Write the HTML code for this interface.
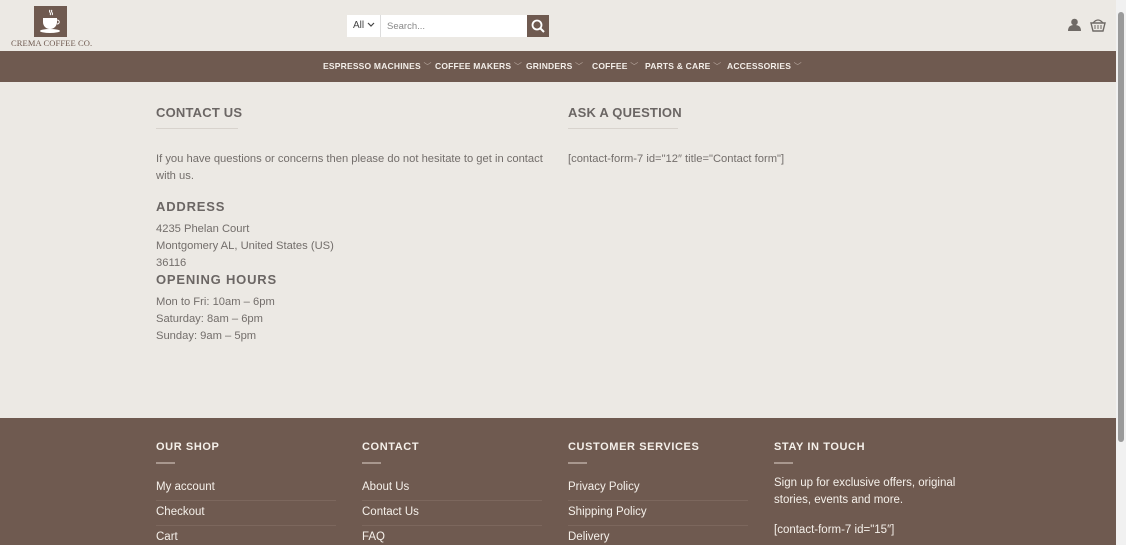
<!DOCTYPE html>
<html><head><meta charset="utf-8"><style>
*{box-sizing:border-box;margin:0;padding:0}
body{width:1126px;height:545px;overflow:hidden;background:#ece9e4;font-family:"Liberation Sans",sans-serif;color:#6b6664;position:relative}
.sb{position:absolute;right:0;top:0;width:10px;height:545px;background:#f1f1f1}
.sb i{position:absolute;left:2px;top:12px;width:6px;height:430px;background:#9a9a9a;border-radius:3px}
.hdr{position:absolute;left:0;top:0;width:1116px;height:51px}
.logo{position:absolute;left:34px;top:6px;width:33px;height:31px;background:#6f5a50}
.logotxt{position:absolute;left:11px;top:38px;font-family:"Liberation Serif",serif;font-size:8.5px;color:#6f5a50;letter-spacing:.1px}
.sel{position:absolute;left:347px;top:15px;width:34px;height:22px;background:#fff;font-size:10px;color:#444;padding:5px 6px;border-right:1px solid #ddd;white-space:nowrap}
.inp{position:absolute;left:381px;top:15px;width:146px;height:22px;background:#fff;font-size:9.5px;color:#888;padding:6px 6px}
.btn{position:absolute;left:527px;top:15px;width:22px;height:22px;background:#6f5a50}
.nav{position:absolute;left:0;top:51px;width:1116px;height:31px;background:#6f5a50;color:#f3eee9;font-size:8.5px;font-weight:bold;letter-spacing:.2px}
.nav span{position:absolute;top:10px;white-space:nowrap}
.nav b{font-weight:normal;color:#b9a9a0;font-size:8px}
h2{position:absolute;font-size:13px;font-weight:bold;color:#6b6664;letter-spacing:.2px}
.ul{position:absolute;height:1px;background:#d8d3cd}
p{position:absolute;font-size:11.2px;line-height:17px;color:#736e6b}
.foot{position:absolute;left:0;top:418px;width:1116px;height:127px;background:#6f5a50;color:#f5f0ea}
.foot h3{position:absolute;top:23px;font-size:11px;font-weight:bold;letter-spacing:.6px}
.foot .d{position:absolute;top:44px;width:19px;height:2px;background:#a8978e}
.foot a{position:absolute;font-size:11.5px;color:#f5f0ea}
.foot .l{position:absolute;height:1px;background:#7c675d;width:180px}
</style></head><body>
<div class="hdr">
<div class="logo"><svg width="33" height="31" viewBox="0 0 33 31"><path d="M16 4c-2 2 2 3 0 5M18 4c-2 2 2 3 0 5" stroke="#fff" fill="none" stroke-width="1"/><path d="M9 12h14v4c0 4-3 7-7 7s-7-3-7-7z" fill="#fff"/><path d="M23 14c3 0 3 4 0 4" stroke="#fff" fill="none"/><ellipse cx="16" cy="25" rx="10" ry="2" fill="#fff"/></svg></div>
<div class="logotxt">CREMA COFFEE CO.</div>
<div class="sel">All <svg width="8" height="6"><path d="M1 1l3 3 3-3" stroke="#444" fill="none" stroke-width="1.2"/></svg></div>
<div class="inp">Search...</div>
<div class="btn"><svg width="22" height="22"><circle cx="10" cy="10" r="4.5" stroke="#fff" stroke-width="1.8" fill="none"/><path d="M13.5 13.5l3.5 3.5" stroke="#fff" stroke-width="2"/></svg></div>
<svg style="position:absolute;left:1068px;top:18px" width="13" height="14"><circle cx="6.5" cy="4" r="3.3" fill="#6f6a66"/><path d="M0 13c0-5 3-6 6.5-6S13 8 13 13z" fill="#6f6a66"/></svg>
<svg style="position:absolute;left:1090px;top:17px" width="16" height="15"><path d="M3 6Q8 0 13 6" stroke="#6f6a66" fill="none" stroke-width="1.3"/><path d="M1 6h14l-2 8H3z" fill="none" stroke="#6f6a66" stroke-width="1.4"/><path d="M5 8v4M8 8v4M11 8v4" stroke="#6f6a66"/></svg>
</div>
<div class="nav">
<span style="left:323px">ESPRESSO MACHINES <b>﹀</b></span>
<span style="left:435px">COFFEE MAKERS <b>﹀</b></span>
<span style="left:526px">GRINDERS <b>﹀</b></span>
<span style="left:592px">COFFEE <b>﹀</b></span>
<span style="left:645px">PARTS &amp; CARE <b>﹀</b></span>
<span style="left:727px">ACCESSORIES <b>﹀</b></span>
</div>
<h2 style="left:156px;top:105px">CONTACT US</h2>
<div class="ul" style="left:156px;top:128px;width:82px"></div>
<h2 style="left:568px;top:105px">ASK A QUESTION</h2>
<div class="ul" style="left:568px;top:128px;width:110px"></div>
<p style="left:156px;top:151px;width:400px">If you have questions or concerns then please do not hesitate to get in contact with us.</p>
<p style="left:568px;top:151px">[contact-form-7 id="12″ title="Contact form"]</p>
<h2 style="left:156px;top:199px;letter-spacing:.8px">ADDRESS</h2>
<p style="left:156px;top:221px">4235 Phelan Court<br>Montgomery AL, United States (US)<br>36116</p>
<h2 style="left:156px;top:272px;letter-spacing:.8px">OPENING HOURS</h2>
<p style="left:156px;top:294px">Mon to Fri: 10am – 6pm<br>Saturday: 8am – 6pm<br>Sunday: 9am – 5pm</p>
<div class="foot">
<h3 style="left:156px">OUR SHOP</h3><div class="d" style="left:156px"></div>
<h3 style="left:362px">CONTACT</h3><div class="d" style="left:362px"></div>
<h3 style="left:568px">CUSTOMER SERVICES</h3><div class="d" style="left:568px"></div>
<h3 style="left:774px">STAY IN TOUCH</h3><div class="d" style="left:774px"></div>
<a style="left:156px;top:63px">My account</a><div class="l" style="left:156px;top:82px"></div>
<a style="left:156px;top:88px">Checkout</a><div class="l" style="left:156px;top:107px"></div>
<a style="left:156px;top:113px">Cart</a>
<a style="left:362px;top:63px">About Us</a><div class="l" style="left:362px;top:82px"></div>
<a style="left:362px;top:88px">Contact Us</a><div class="l" style="left:362px;top:107px"></div>
<a style="left:362px;top:113px">FAQ</a>
<a style="left:568px;top:63px">Privacy Policy</a><div class="l" style="left:568px;top:82px"></div>
<a style="left:568px;top:88px">Shipping Policy</a><div class="l" style="left:568px;top:107px"></div>
<a style="left:568px;top:113px">Delivery</a>
<a style="left:774px;top:57px;width:190px;line-height:17px">Sign up for exclusive offers, original stories, events and more.</a>
<a style="left:774px;top:106px">[contact-form-7 id="15″]</a>
</div>
<div class="sb"><i></i></div>
</body></html>
